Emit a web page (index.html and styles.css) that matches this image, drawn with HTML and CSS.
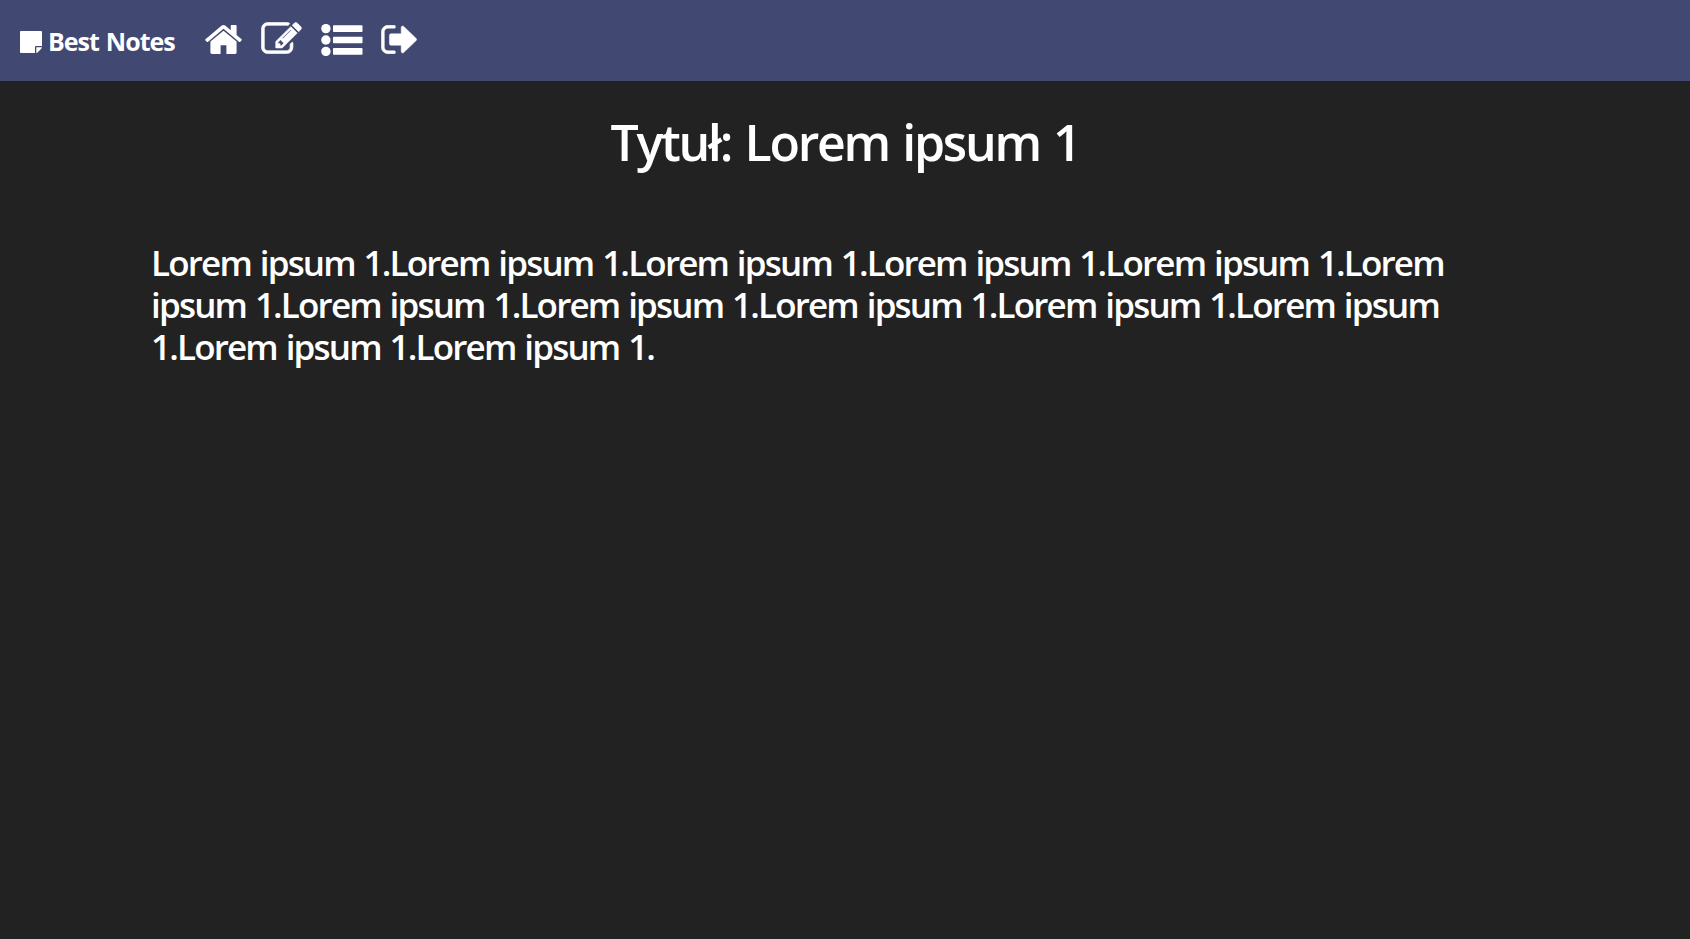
FILE: index.html
```html
<!DOCTYPE html>
<html lang="pl">
<head>
<meta charset="utf-8">
<title>Best Notes</title>
<link rel="stylesheet" href="styles.css">
</head>
<body>
<nav class="navbar">
  <a class="brand">
    <svg class="brand-icon" viewBox="0 0 22 22"><path d="M1 0H21Q22 0 22 1V15H16Q15 15 15 16V22H1Q0 22 0 21V1Q0 0 1 0ZM16.3 16.3H22Q21.7 17.3 21 18L18 21Q17.3 21.8 16.3 22Z"/></svg>
    <span class="brand-name">Best Notes</span>
  </a>
  <div class="links">
    <a class="link"><svg class="icon home" viewBox="82 253 1628 1283" preserveAspectRatio="none"><path d="M1472 992v480q0 26-19 45t-45 19h-384v-384h-256v384h-384q-26 0-45-19t-19-45v-480q0-1 .5-3t.5-3l575-474 575 474q1 2 1 6zm223-69l-62 74q-8 9-21 11h-3q-13 0-21-7l-692-577-692 577q-12 8-24 7-13-2-21-11l-62-74q-8-10-7-23.5t11-21.5l719-599q32-26 76-26t76 26l244 204v-195q0-14 9-23t23-9h192q14 0 23 9t9 23v408l219 182q10 8 11 21.5t-7 23.5z"/></svg></a>
    <a class="link"><svg class="icon edit" viewBox="-20 108 1832 1448" preserveAspectRatio="none"><path d="M888 1184l116-116-152-152-116 116v56h96v96h56zm440-720q-16-16-33 1l-350 350q-17 17-1 33t33-1l350-350q17-17 1-33zm80 594v190q0 119-84.5 203.5t-203.5 84.5h-832q-119 0-203.5-84.5t-84.5-203.5v-832q0-119 84.5-203.5t203.5-84.5h832q63 0 117 25 15 7 18 23 3 17-9 29l-49 49q-14 14-32 8-23-6-45-6h-832q-66 0-113 47t-47 113v832q0 66 47 113t113 47h832q66 0 113-47t47-113v-126q0-13 9-22l64-64q15-15 35-7t20 29zm-96-738l288 288-672 672h-288v-288zm444 132l-92 92-288-288 92-92q28-28 68-28t68 28l152 152q28 28 28 68t-28 68z"/></svg></a>
    <a class="link"><svg class="icon list" viewBox="0 0 42 32"><circle cx="4.9" cy="4.6" r="4.7"/><circle cx="4.9" cy="16" r="4.7"/><circle cx="4.9" cy="27.4" r="4.7"/><rect x="12" y="1.3" width="29.5" height="6.6" rx=".7"/><rect x="12" y="12.7" width="29.5" height="6.6" rx=".7"/><rect x="12" y="24.1" width="29.5" height="6.6" rx=".7"/></svg></a>
    <a class="link"><svg class="icon exit" viewBox="80 240 1568 1312" preserveAspectRatio="none"><path d="M704 1440q0 4 1 20t.5 26.5-3 23.5-10 19.5-20.5 6.5h-288q-119 0-203.5-84.5t-84.5-203.5v-704q0-119 84.5-203.5t203.5-84.5h288q13 0 22.5 9.5t9.5 22.5q0 4 1 20t.5 26.5-3 23.5-10 19.5-20.5 6.5h-288q-66 0-113 47t-47 113v704q0 66 47 113t113 47h280l11.5 1 11.5 3 8 5.5 7 9 2 13.5zm928-544q0 26-19 45l-544 544q-19 19-45 19t-45-19-19-45v-288h-448q-26 0-45-19t-19-45v-384q0-26 19-45t45-19h448v-288q0-26 19-45t45-19 45 19l544 544q19 19 19 45z"/></svg></a>
  </div>
</nav>
<main class="note">
  <h1 class="title">Tytuł: Lorem ipsum 1</h1>
  <p class="body">Lorem ipsum 1.Lorem ipsum 1.Lorem ipsum 1.Lorem ipsum 1.Lorem ipsum 1.Lorem<br>ipsum 1.Lorem ipsum 1.Lorem ipsum 1.Lorem ipsum 1.Lorem ipsum 1.Lorem ipsum<br>1.Lorem ipsum 1.Lorem ipsum 1.</p>
</main>
</body>
</html>
```
FILE: styles.css
```css
body {
  margin: 0;
  min-height: 100vh;
  background: #222222;
  color: #ffffff;
  font-family: "Segoe UI", "Open Sans", "Noto Sans", sans-serif;
}
.navbar {
  display: flex;
  align-items: flex-start;
  height: 81px;
  box-sizing: border-box;
  padding-left: 20px;
  background: #414872;
}
.brand {
  display: flex;
  align-items: flex-start;
  gap: 6px;
  width: 185px;
  padding-top: 23px;
}
.brand-icon {
  width: 22px;
  height: 22px;
  margin-top: 8px;
  fill: #ffffff;
}
.brand-name {
  font-size: 25px;
  font-weight: 700;
  line-height: 36px;
  letter-spacing: -1px;
  word-spacing: 1.5px;
  white-space: nowrap;
}
.links {
  display: flex;
  align-items: flex-end;
  height: 54px;
}
.link {
  display: flex;
}
.icon {
  display: block;
  fill: #ffffff;
}
.home {
  width: 37px;
  height: 29px;
  margin-right: 19px;
}
.edit {
  width: 41px;
  height: 32px;
  margin-right: 19px;
  stroke: #ffffff;
  stroke-width: 30px;
}
.list {
  width: 42px;
  height: 32px;
  margin: 0 18px -2px 0;
}
.exit {
  width: 36px;
  height: 29px;
  stroke: #ffffff;
  stroke-width: 24px;
}
.note {
  padding: 27px 151px 0;
}
.title {
  margin: 0;
  font-size: 50px;
  font-weight: 600;
  line-height: 69px;
  letter-spacing: -2.25px;
  word-spacing: 2.5px;
  text-align: center;
  white-space: nowrap;
}
.body {
  margin: 65px 0 0;
  font-size: 35px;
  font-weight: 600;
  line-height: 42px;
  letter-spacing: -1.82px;
  word-spacing: 1.5px;
  white-space: nowrap;
}
```
